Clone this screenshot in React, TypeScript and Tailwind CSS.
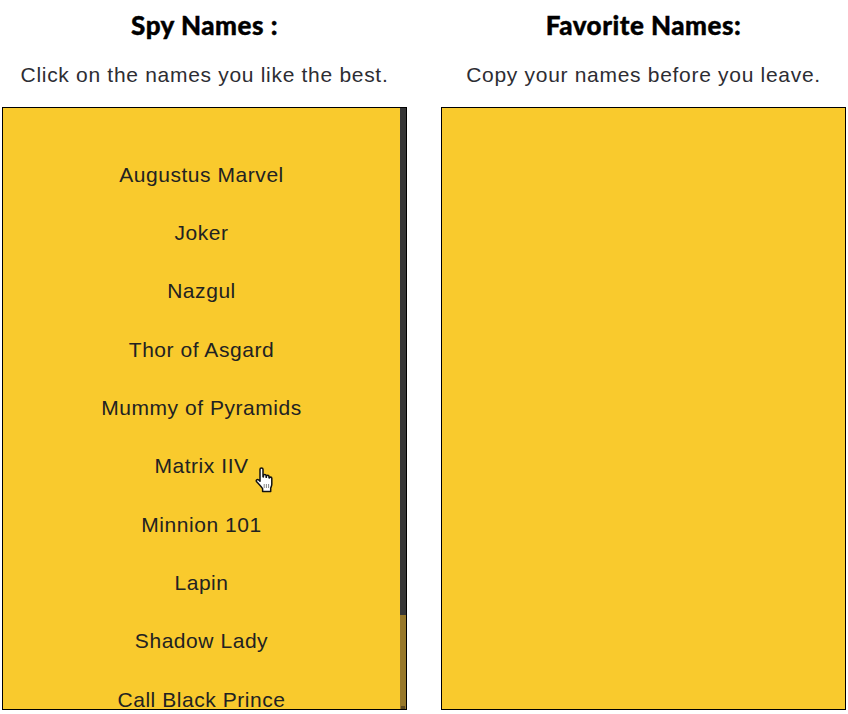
const names = [
  "Augustus Marvel",
  "Joker",
  "Nazgul",
  "Thor of Asgard",
  "Mummy of Pyramids",
  "Matrix IIV",
  "Minnion 101",
  "Lapin",
  "Shadow Lady",
  "Call Black Prince",
];

function HandCursor() {
  return (
    <svg className="absolute left-[255px] top-[467px]" width="20" height="27" viewBox="0 0 20 27" aria-hidden="true">
      <path
        d="M5 2.300c0-1.700 3-1.700 3 0v7.500l.4.100V8.500c0-1.400 2.700-1.400 2.700 0v1.700l.3.100V9.300c0-1.300 2.600-1.300 2.600.1v1.400l.3.100c0-1.100 2.500-1.100 2.500.3v6c0 1.600-.6 2.600-1.100 3.800v3.600H7.600v-2.900C6.200 19.600 3.500 16.800 1.700 14.800c-1.200-1.500.6-3 2-1.800l1.300 1.200z"
        fill="#fff"
        stroke="#111"
        strokeWidth="1.500"
        strokeLinejoin="round"
      />
      <path d="M9.200 17v4M11.400 17v4M13.600 17v4" stroke="#555" strokeWidth="0.700" />
    </svg>
  );
}

export default function App() {
  return (
    <div className="relative flex h-[714px] w-[848px] justify-between overflow-hidden bg-white pr-[2px] pl-[2px] font-['Liberation_Sans',sans-serif]">
      <section className="w-[405px]">
        <h2 className="pt-[10px] text-center font-['Lato',sans-serif] text-[26px] leading-[30px] font-black tracking-[0.5px] text-black [-webkit-text-stroke:0.4px_black]">Spy Names :</h2>
        <p className="mt-[21px] text-center text-[21px] leading-[28px] tracking-[0.7px] text-[#2d2d33]">Click on the names you like the best.</p>
        <div className="relative mt-[18px] h-[603px] overflow-hidden border border-black bg-[#f9ca2d] pt-[37.500px]">
          <ul className="pr-[6px]">
            {names.map(n => (
              <li key={n} className="flex h-[58.300px] items-center justify-center text-[21px] tracking-[0.55px] text-[#222222]">
                {n}
              </li>
            ))}
          </ul>
          <div className="absolute top-0 right-0 bottom-0 flex w-[6px] flex-col bg-[#97782a]">
            <div className="h-[507px] bg-[#363636]" />
            <div className="mt-auto ml-[1px] h-[3px] w-[4px] bg-[#5c4a20]" />
          </div>
        </div>
      </section>
      <section className="w-[405px]">
        <h2 className="pt-[10px] text-center font-['Lato',sans-serif] text-[26px] leading-[30px] font-black tracking-[0.5px] text-black [-webkit-text-stroke:0.4px_black]">Favorite Names:</h2>
        <p className="mt-[21px] text-center text-[21px] leading-[28px] tracking-[0.7px] text-[#2d2d33]">Copy your names before you leave.</p>
        <div className="mt-[18px] h-[603px] border border-black bg-[#f9ca2d]" />
      </section>
      <HandCursor />
    </div>
  );
}
